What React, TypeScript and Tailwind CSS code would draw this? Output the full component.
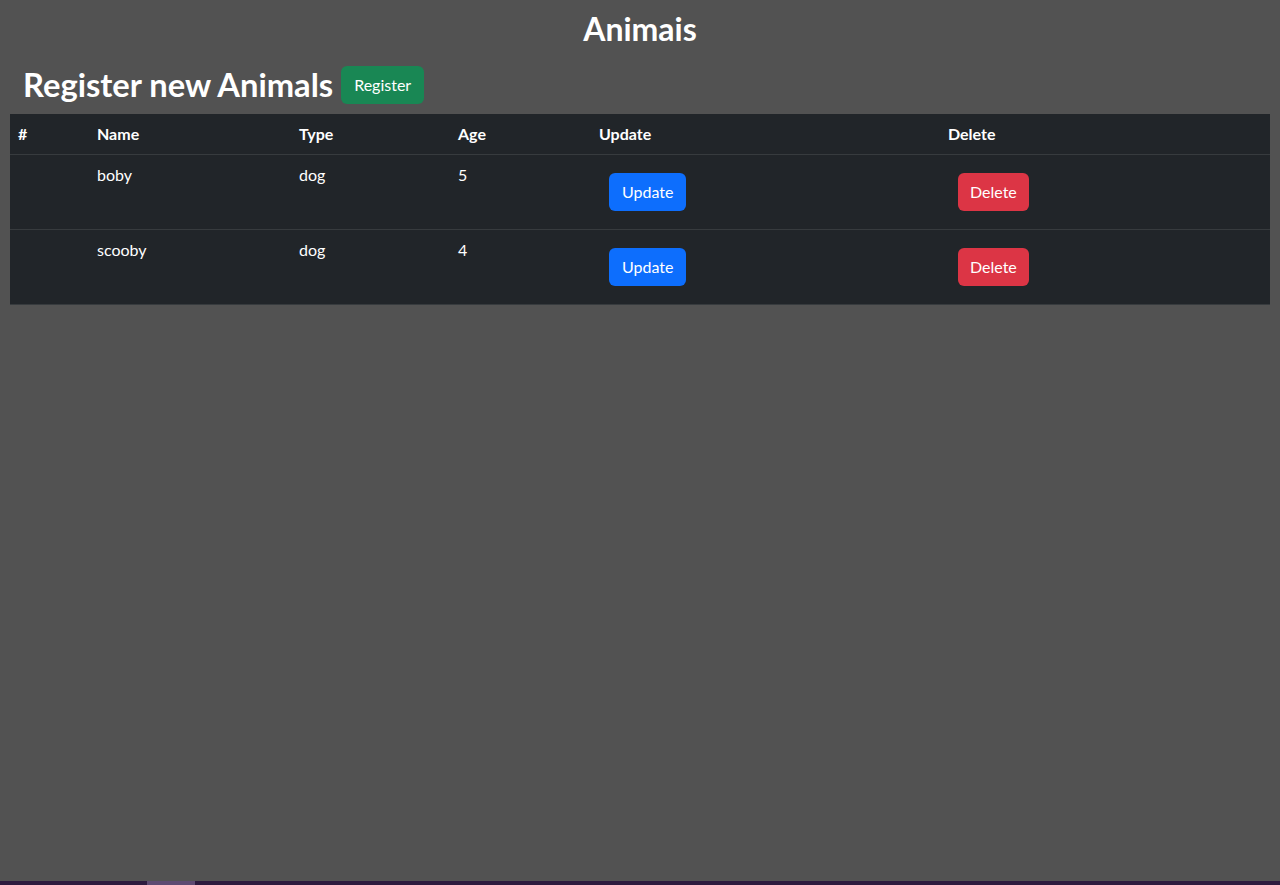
const animals = [
  { id: 1, name: "boby", type: "dog", age: 5 },
  { id: 2, name: "scooby", type: "dog", age: 4 },
];

export default function App() {
  return (
    <div
      className="flex min-h-screen flex-col bg-[#525252] text-white"
      style={{ fontFamily: 'Lato, "Noto Sans", sans-serif' }}
    >
      <div className="flex-1">
        <h2 className="pt-[10px] text-center text-[32px] font-bold leading-[38px]">
          Animais
        </h2>
        <div className="mt-[18px] flex items-center gap-[8px] pl-[23px]">
          <h2 className="text-[32.7px] font-bold leading-[38px]">
            Register new Animals
          </h2>
          <button className="h-[38px] rounded-md bg-[#198754] px-[13px] text-[16px] text-white">
            Register
          </button>
        </div>
        <div className="px-[10px] pt-[10px]">
          <table className="w-full border-collapse bg-[#212529] text-left text-[16px]">
            <thead>
              <tr className="border-b border-[#373b3e]">
                <th className="h-[40px] w-[79px] px-2 font-bold">#</th>
                <th className="w-[202px] px-2 font-bold">Name</th>
                <th className="w-[159px] px-2 font-bold">Type</th>
                <th className="w-[141px] px-2 font-bold">Age</th>
                <th className="w-[349px] px-2 font-bold">Update</th>
                <th className="px-2 font-bold">Delete</th>
              </tr>
            </thead>
            <tbody>
              {animals.map((a) => (
                <tr key={a.id} className="border-b border-[#373b3e] align-top">
                  <td className="p-2"></td>
                  <td className="p-2">{a.name}</td>
                  <td className="p-2">{a.type}</td>
                  <td className="p-2">{a.age}</td>
                  <td className="p-2">
                    <button className="m-[10px] h-[38px] rounded-md bg-[#0d6efd] px-[13px] text-white">
                      Update
                    </button>
                  </td>
                  <td className="p-2">
                    <button className="m-[10px] h-[38px] rounded-md bg-[#dc3545] px-3 text-white">
                      Delete
                    </button>
                  </td>
                </tr>
              ))}
            </tbody>
          </table>
        </div>
      </div>
      <div className="flex h-[4px] bg-[#2d1a3e]">
        <div className="ml-[147px] w-[48px] bg-[#5e4a72]" />
      </div>
    </div>
  );
}
